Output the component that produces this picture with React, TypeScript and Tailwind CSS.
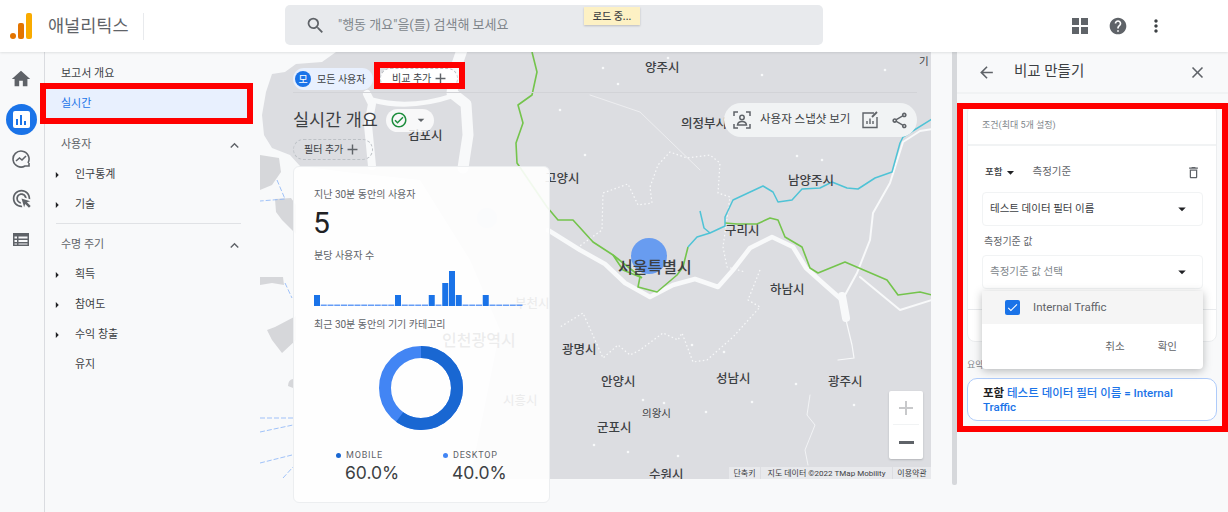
import React from 'react';
import {
  MdAdd,
  MdAdsClick,
  MdArrowBack,
  MdArrowDropDown,
  MdArrowRight,
  MdCheck,
  MdClose,
  MdExpandLess,
  MdHelp,
  MdHome,
  MdMoreVert,
  MdOutlineCheckCircle,
  MdOutlineDelete,
  MdOutlineShare,
  MdSearch,
} from 'react-icons/md';

const mapLabels = [
  { text: '양주시', cls: 'left-[385px] top-[7px] text-[12.5px]' },
  { text: '의정부시', cls: 'left-[421px] top-[63px] text-[12.5px]' },
  { text: '김포시', cls: 'left-[148px] top-[75px] text-[12.5px]' },
  { text: '고양시', cls: 'left-[285px] top-[118px] text-[12.5px]' },
  { text: '남양주시', cls: 'left-[528px] top-[120px] text-[12.5px]' },
  { text: '구리시', cls: 'left-[465px] top-[170px] text-[12.5px]' },
  { text: '서울특별시', cls: 'left-[358px] top-[204px] text-[16px]' },
  { text: '하남시', cls: 'left-[510px] top-[229px] text-[12.5px]' },
  { text: '부천시', cls: 'left-[255px] top-[243px] text-[12.5px]' },
  { text: '인천광역시', cls: 'left-[182px] top-[277px] text-[16px]' },
  { text: '광명시', cls: 'left-[302px] top-[289px] text-[12.5px]' },
  { text: '안양시', cls: 'left-[341px] top-[321px] text-[12.5px]' },
  { text: '성남시', cls: 'left-[456px] top-[318px] text-[12.5px]' },
  { text: '광주시', cls: 'left-[568px] top-[321px] text-[12.5px]' },
  { text: '시흥시', cls: 'left-[243px] top-[340px] text-[12.5px]' },
  { text: '의왕시', cls: 'left-[382px] top-[354px] text-[10.5px] font-normal' },
  { text: '군포시', cls: 'left-[337px] top-[367px] text-[12.5px]' },
  { text: '수원시', cls: 'left-[389px] top-[414px] text-[12.5px]' },
  { text: '기', cls: 'left-[659px] top-[2px] text-[10.5px] font-normal' },
];

const tallBars: Record<number, number> = { 0: 11, 12: 11, 17: 11, 19: 23, 20: 35, 21: 11, 25: 11 };

const specks = [
  [603, 68], [618, 84], [762, 75], [885, 70], [797, 116], [668, 58], [560, 110], [585, 155],
  [797, 156], [822, 160], [724, 352], [692, 345], [643, 400], [664, 403], [796, 384], [752, 402],
  [706, 412], [594, 445], [628, 452], [678, 456], [854, 405],
];

function SeoulMap() {
  const dash = '1.5 2.5';
  return (
    <svg viewBox="260 52 671 427" className="absolute left-0 top-0 h-[427px] w-[671px]">
      <rect x="260" y="52" width="671" height="427" fill="#dcdde1" />
      {/* sea */}
      <path
        d="M260 52H336L322 62 296 64 285 72 272 74 266 92 262 115 264 135 272 148 290 155 300 166 345 172 350 300 330 479H260Z"
        fill="#f8f9fa"
      />
      <path d="M345 172L420 180 470 260 500 330 470 479H330Z" fill="#f8f9fa" />
      {/* islands */}
      <g fill="#d6d7da">
        <path d="M260 155L279 158 281 172 272 185 260 190Z" />
        <path d="M275 199L291 198 296 205 296 234 282 220 276 212Z" />
        <path d="M260 277L283 277 284 285 272 283 260 285Z" />
        <path d="M267 330L275 327 296 316 296 340 282 353 272 340Z" />
        <path d="M288 386Q288 380 293 379V388Z" />
      </g>
      {/* rivers */}
      <g fill="none" stroke="#f8f9fa" strokeLinecap="round" strokeLinejoin="round">
        <path d="M462 50L455 70 452 93 466 104 468 135 463 168" strokeWidth="11" />
        <path d="M367 94L372 104 368 125 372 166" strokeWidth="8" />
        <path d="M372 100Q410 110 452 96" strokeWidth="5" />
        <path d="M548 230L580 250 605 264 625 283 650 297 673 285 695 279 718 287 733 270 750 248 772 237 793 247 806 268 825 285 842 300" strokeWidth="4.5" />
        <path d="M842 296L846 318" strokeWidth="8" />
        <path d="M932 129L920 131 903 142 890 183 873 213 870 240 857 273 845 295" strokeWidth="2" />
        <path d="M860 277L900 310 932 300" strokeWidth="2" />
        <path d="M846 320L852 345 854 358 838 360" strokeWidth="1.2" />
        <path d="M810 395L807 415 815 425 805 450 808 465" strokeWidth="0.8" />
        <path d="M590 95L640 112 700 170" strokeWidth="0.6" />
      </g>
      <g fill="#f8f9fa">
        {specks.map(([x, y]) => (
          <circle key={`${x}-${y}`} cx={x} cy={y} r="1.3" />
        ))}
      </g>
      {/* district borders */}
      <g fill="none" stroke="#f8f9fa" strokeWidth="1.2" strokeDasharray={dash} strokeLinejoin="round">
        <path d="M577 248L602 230 603 193 628 184 638 205 652 203 650 187 658 165 670 152 687 158 710 155 720 163 718 193 730 197 723 247 727 267 745 272" />
        <path d="M760 270L748 300 760 307 733 337 707 360 693 362 682 333 678 340 663 333 640 350 630 355 618 345 603 358 583 313 560 327" />
      </g>
      {/* sea borders */}
      <g fill="none" stroke="#8ab4f8" strokeOpacity="0.8" strokeWidth="1" strokeDasharray="5 2">
        <path d="M277 180L285 199 260 201" />
        <path d="M285 283L292 298" />
        <path d="M260 418H293" />
        <path d="M260 432L293 425" />
        <path d="M260 463L292 455" />
        <path d="M283 478L293 467" />
      </g>
      {/* lines */}
      <g fill="none" stroke="#74c44c" strokeWidth="1.6" strokeLinejoin="round">
        <path d="M532 52L537 72 532 95 518 105 523 123 516 143 517 163 547 207 558 220 573 220 593 242 613 255 642 278" />
        <path d="M613 255L623 270 640 277 638 287 657 292 677 275 683 267 688 247" />
        <path d="M725 223L737 224 757 224 770 218 778 220 785 237 802 247 810 268 818 273 845 262 887 280 898 295 920 292 932 295" />
      </g>
      <path
        d="M700 211L704 228 710 233 725 226 725 217 733 200 763 186 773 192 778 202 792 200 802 189 820 188 832 182 847 188 858 189 875 178 892 172 900 143 903 137 932 119M688 247L697 237 710 233"
        fill="none"
        stroke="#4fc3d6"
        strokeWidth="1.5"
        strokeLinejoin="round"
      />
      <circle cx="649" cy="256" r="18" fill="#4285f4" fillOpacity="0.75" />
      <circle cx="487" cy="218" r="10" fill="#4285f4" fillOpacity="0.12" />
    </svg>
  );
}

function SnapshotIcon() {
  return (
    <svg viewBox="0 0 18 18" className="h-[18px] w-[18px]" fill="none" stroke="#5f6368" strokeWidth="1.5">
      <path d="M1 5V1H5M13 1H17V5M17 13V17H13M5 17H1V13" />
      <circle cx="9" cy="6.5" r="2.2" />
      <path d="M4.5 14Q5 10.5 9 10.5T13.5 14Z" />
    </svg>
  );
}

function ChartEditIcon() {
  return (
    <svg viewBox="0 0 18 18" className="h-[18px] w-[18px]" fill="none" stroke="#5f6368" strokeWidth="1.4">
      <path d="M13 2H2V16.500H16V6" />
      <path d="M6 13V10M9 13V7.500M12 13V10" />
      <path d="M11 6L16 1" strokeWidth="1.800" />
    </svg>
  );
}

function RailTrendIcon() {
  return (
    <svg viewBox="0 0 18 18" className="h-[18px] w-[18px]" fill="none" stroke="#5f6368" strokeWidth="1.6">
      <path d="M16 13A8 8 0 1 0 13 16H17V13" />
      <path d="M4 11L7.500 8 10 10 14 6" />
    </svg>
  );
}

function TableIcon() {
  return (
    <svg viewBox="0 0 16 13" className="h-[13px] w-[16px]" fill="#5f6368">
      <path d="M0 0H16V13H0ZM1.500 3.500V5.500H4V3.500ZM5.500 3.500V5.500H14.500V3.500ZM1.500 7V9H4V7ZM5.500 7V9H14.500V7ZM5.500 10.500V11.500H14.500V10.500ZM1.500 10.500V11.500H4V10.500Z" fillRule="evenodd" />
    </svg>
  );
}

function AddChip({ label, className }: { label: string; className: string }) {
  return (
    <div className={`flex h-[21px] items-center gap-[1px] rounded-full border border-dashed border-[#bdc1c6] text-[10px] text-[#3c4043] ${className}`}>
      <span>{label}</span>
      <MdAdd size={17} className="text-[#5f6368]" />
    </div>
  );
}

function DeviceStat({ label, value, dot }: { label: string; value: string; dot: string }) {
  return (
    <div className="w-[107px] shrink-0">
      <div className="flex items-center gap-[5px] text-[9px] tracking-[0.8px] text-[#5f6368]">
        <span className={`h-[5px] w-[5px] rounded-full ${dot}`} />
        {label}
      </div>
      <div className="-mt-[2px] ml-[9px] font-['Inter',sans-serif] text-[17.5px] leading-[23px] text-[#3c4043]">{value}</div>
    </div>
  );
}

function SelectBox({ label, muted }: { label: string; muted?: boolean }) {
  return (
    <div className={`flex h-[34px] items-center justify-between rounded-[4px] border border-[#f1f3f4] pl-[7px] pr-[11px] text-[10.500px] ${muted ? 'text-[#80868b]' : 'text-[#3c4043]'}`}>
      <span>{label}</span>
      <MdArrowDropDown size={18} className="text-[#202124]" />
    </div>
  );
}

function NavChild({ label, arrow = true }: { label: string; arrow?: boolean }) {
  return (
    <div className="flex h-[30px] items-center pl-[1px]">
      <span className="flex w-[18px] justify-start">
        {arrow && <MdArrowRight size={14} className="-ml-[7px] text-[#202124]" />}
      </span>
      {label}
    </div>
  );
}

function NavTitle({ label }: { label: string }) {
  return (
    <div className="flex h-[30px] items-center justify-between text-[#5f6368]">
      <span className="pl-[5px]">{label}</span>
      <MdExpandLess size={17} className="-mr-[2px]" />
    </div>
  );
}

export default function App() {
  return (
    <div className="relative flex h-[512px] w-[1228px] flex-col overflow-hidden bg-[#f8f9fa] font-['Roboto','Noto_Sans_CJK_KR',sans-serif]">
      {/* Top bar */}
      <header className="relative z-10 flex h-[52px] shrink-0 items-center bg-white shadow-[0_1px_2px_rgba(60,64,67,0.12)]">
        <div className="flex w-[285px] shrink-0 items-center">
          <svg viewBox="0 0 22 26" className="ml-[10px] h-[26px] w-[22px]">
            <circle cx="3" cy="23" r="3" fill="#e37400" />
            <rect x="8" y="10" width="6" height="16" rx="2" fill="#e37400" />
            <rect x="16" y="0" width="6" height="26" rx="2" fill="#f9ab00" />
          </svg>
          <span className="ml-[16px] text-[17.5px] text-[#5f6368]">애널리틱스</span>
          <div className="ml-[14px] h-[27px] w-px bg-[#e8eaed]" />
        </div>
        <div className="-mt-[2px] flex h-[40px] w-[538px] items-center rounded-[5px] bg-[#e8eaed] pl-[20px]">
          <MdSearch size={21} className="text-[#5f6368]" />
          <span className="ml-[12px] text-[13px] text-[#80868b]">"행동 개요"을(를) 검색해 보세요</span>
        </div>
        <div className="ml-auto mr-[62px] flex items-center gap-[20px]">
          <svg viewBox="0 0 16 16" className="h-[16px] w-[16px]" fill="#5f6368">
            <rect width="7" height="7" />
            <rect x="9" width="7" height="7" />
            <rect y="9" width="7" height="7" />
            <rect x="9" y="9" width="7" height="7" />
          </svg>
          <MdHelp size={20} className="text-[#5f6368]" />
          <MdMoreVert size={20} className="-ml-[2px] text-[#3c4043]" />
        </div>
        <div className="absolute left-[584px] top-[7px] flex h-[18px] w-[56px] items-center justify-center bg-[#fdf1c4] text-[10px] font-medium text-[#3c4043] shadow-[0_1px_2px_rgba(0,0,0,0.2)]">
          로드 중...
        </div>
      </header>

      <div className="flex min-h-0 flex-1">
        {/* Icon rail */}
        <aside className="flex w-[45px] shrink-0 flex-col items-center border-r border-[#dadce0] pr-[2px] pt-[17px] text-[#5f6368]">
          <div className="flex h-[20px] items-center justify-center">
            <MdHome size={22} />
          </div>
          <div className="mt-[15px] flex h-[31px] w-[31px] items-center justify-center rounded-full bg-[#1a73e8]">
            <div className="flex h-[17px] w-[17px] items-end justify-center gap-[2px] rounded-[2px] bg-white pb-[3px]">
              <span className="h-[6px] w-[2px] bg-[#1a73e8]" />
              <span className="h-[10px] w-[2px] bg-[#1a73e8]" />
              <span className="h-[4px] w-[2px] bg-[#1a73e8]" />
            </div>
          </div>
          <div className="mt-[15px]">
            <RailTrendIcon />
          </div>
          <div className="mt-[20px]">
            <MdAdsClick size={21} />
          </div>
          <div className="mt-[24px]">
            <TableIcon />
          </div>
        </aside>

        {/* Report nav */}
        <nav className="w-[215px] shrink-0 pt-[8px] text-[11px] text-[#3c4043]">
          <div className="flex h-[29px] items-center pl-[16px]">보고서 개요</div>
          <div className="flex h-[31px] w-[202px] items-center bg-[#e8f0fe] pl-[16px] text-[#1a73e8]">실시간</div>
          <div className="ml-[11px] mt-[10px] w-[185px]">
            <NavTitle label="사용자" />
            <NavChild label="인구통계" />
            <NavChild label="기술" />
            <div className="mt-[3px] h-px bg-[#e0e2e5]" />
            <div className="mt-[6px]">
              <NavTitle label="수명 주기" />
            </div>
            <NavChild label="획득" />
            <NavChild label="참여도" />
            <NavChild label="수익 창출" />
            <NavChild label="유지" arrow={false} />
          </div>
        </nav>

        {/* Realtime map page */}
        <main className="relative w-[692px] shrink-0">
          <SeoulMap />
          <div className="absolute left-0 top-0 h-[427px] w-[671px] overflow-hidden">
            {mapLabels.map((l) => (
              <span key={l.text} className={`absolute whitespace-nowrap font-medium text-[#3c4043] ${l.cls}`}>
                {l.text}
              </span>
            ))}
          </div>

          <div className="absolute left-[469px] top-[415px] flex h-[12px] gap-px overflow-hidden text-[8px] leading-[14px] text-[#3c4043]">
            <span className="w-[31px] bg-[#e8e9ec] text-center">단축키</span>
            <span className="w-[131px] bg-[#e8e9ec] text-center">지도 데이터 ©2022 TMap Mobility</span>
            <span className="w-[38px] bg-[#e8e9ec] text-center">이용약관</span>
          </div>
          <div className="absolute left-[629px] top-[339px] flex h-[68px] w-[34px] flex-col items-center rounded-[2px] bg-white shadow-[0_1px_2px_rgba(60,64,67,0.25)]">
            <div className="flex h-[34px] w-[26px] items-center justify-center border-b border-[#f1f3f4]">
              <MdAdd size={24} className="text-[#c8c9cb]" />
            </div>
            <div className="flex h-[34px] items-center justify-center">
              <span className="h-[3px] w-[15px] bg-[#5f6368]" />
            </div>
          </div>

          <div className="relative pl-[33px]">
            <div className="flex h-[41px] w-[624px] items-start gap-[7px] border-b border-[#d2d3d7] pt-[16px]">
              <div className="flex h-[22px] w-[80px] items-center gap-[6px] rounded-full bg-[#e8f0fe] pl-[2px] text-[10px] text-[#3c4043]">
                <span className="flex h-[16px] w-[16px] items-center justify-center rounded-full bg-[#1a73e8] text-[10px] text-white">모</span>
                모든 사용자
              </div>
              <AddChip label="비교 추가" className="w-[78px] bg-white pl-[11px]" />
            </div>

            <div className="flex w-[624px] justify-between">
              <div>
                <div className="mt-[16px] flex h-[22px] items-center">
                  <h1 className="text-[17.5px] font-normal text-[#3c4043]">실시간 개요</h1>
                  <div className="ml-[8px] flex h-[23px] w-[48px] items-center rounded-full bg-white/80 pl-[4px] text-[#1e8e3e]">
                    <MdOutlineCheckCircle size={18} />
                    <MdArrowDropDown size={16} className="ml-[5px] text-[#5f6368]" />
                  </div>
                </div>
                <AddChip label="필터 추가" className="mt-[8px] w-[80px] pl-[10px]" />
              </div>
              <div className="mt-[10px] flex h-[34px] w-[193px] items-center rounded-full bg-[#f1f3f4] pl-[9px] text-[#5f6368]">
                <SnapshotIcon />
                <span className="ml-[9px] w-[88px] whitespace-nowrap text-[11.5px] text-[#3c4043]">사용자 스냅샷 보기</span>
                <span className="ml-[13px]">
                  <ChartEditIcon />
                </span>
                <MdOutlineShare size={19} className="ml-[11px]" />
              </div>
            </div>

            <section className="mt-[6px] h-[337px] w-[257px] rounded-[6px] border border-[#eceef0] bg-white/90 px-[20px] pt-[21px]">
              <p className="text-[10px] leading-[14px] text-[#5f6368]">지난 30분 동안의 사용자</p>
              <p className="-ml-[1px] mt-[4px] text-[30px] leading-[34px] text-[#202124]">5</p>
              <p className="mt-[9px] text-[10px] leading-[14px] text-[#5f6368]">분당 사용자 수</p>
              <svg viewBox="0 0 209 36" className="mt-[8px] block h-[36px] w-[209px]">
                {Array.from({ length: 31 }, (_, i) =>
                  tallBars[i] ? (
                    <rect key={i} x={i * 6.75} y={35 - tallBars[i]} width="6" height={tallBars[i]} fill="#1a73e8" />
                  ) : (
                    <rect key={i} x={i * 6.75} y="33.500" width="6" height="1.500" fill="#669df6" />
                  ),
                )}
              </svg>
              <p className="mt-[11px] text-[10px] leading-[14px] text-[#5f6368]">최근 30분 동안의 기기 카테고리</p>
              <div className="mt-[14px] flex justify-center">
                <svg viewBox="0 0 84 84" className="mr-[1px] h-[84px] w-[84px] -rotate-90">
                  <circle cx="42" cy="42" r="36" fill="none" stroke="#4285f4" strokeWidth="12" />
                  <circle cx="42" cy="42" r="36" fill="none" stroke="#1967d2" strokeWidth="12" strokeDasharray="135.700 226.200" />
                </svg>
              </div>
              <div className="mt-[19px] flex pl-[22px]">
                <DeviceStat label="MOBILE" value="60.0%" dot="bg-[#1967d2]" />
                <DeviceStat label="DESKTOP" value="40.0%" dot="bg-[#4285f4]" />
              </div>
            </section>
          </div>
        </main>

        {/* Scrollbar */}
        <div className="w-[5px] shrink-0">
          <div className="h-[433px] w-[5px] rounded-b-[2px] bg-[#d6d8db]" />
        </div>

        {/* Compare panel */}
        <aside className="min-w-0 flex-1 bg-[#f8f9fa]">
          <div className="flex h-[42px] items-center justify-between border-b-2 border-[#f1f3f4] pl-[20px] pr-[21px] text-[#5f6368]">
            <div className="flex items-center">
              <MdArrowBack size={19} />
              <span className="ml-[18px] text-[14.5px] text-[#3c4043]">비교 만들기</span>
            </div>
            <MdClose size={19} />
          </div>

          <div className="relative px-[10px] pt-[10px]">
            <div className="h-[238px] w-[250px] rounded-[8px] border border-[#eceef0] bg-white">
              <div className="flex h-[41px] items-center border-b-2 border-[#f1f3f4] pl-[14px] pt-[3px] text-[9px] text-[#80868b]">조건(최대 5개 설정)</div>
              <div className="pl-[14px] pr-[13px]">
                <div className="flex h-[46px] items-center pl-[3px] pr-[2px] pt-[6px] text-[10.500px]">
                  <span className="text-[9.500px] font-medium text-[#3c4043]">포함</span>
                  <MdArrowDropDown size={17} className="text-[#202124]" />
                  <span className="ml-[13px] text-[#5f6368]">측정기준</span>
                  <MdOutlineDelete size={15} className="ml-auto text-[#5f6368]" />
                </div>
                <SelectBox label="테스트 데이터 필터 이름" />
                <p className="mb-[6px] mt-[9px] pl-[2px] text-[10px] leading-[14px] text-[#5f6368]">측정기준 값</p>
                <SelectBox label="측정기준 값 선택" muted />
              </div>
              <div className="mt-[20px] border-t border-[#e8eaed]" />
            </div>

            <p className="mt-[17px] text-[9px] leading-[12px] text-[#80868b]">요약</p>
            <div className="mt-[7px] h-[43px] w-[250px] rounded-[10px] border border-[#aecbfa] bg-white px-[15px] py-[7px] text-[11.500px] font-medium leading-[14px] text-[#1a73e8]">
              <b className="font-bold text-[#202124]">포함</b> 테스트 데이터 필터 이름 = Internal Traffic
            </div>

            {/* Value dropdown */}
            <div className="absolute left-[25px] top-[197px] w-[221px] rounded-b-[4px] bg-white shadow-[0_2px_8px_rgba(60,64,67,0.35)]">
              <div className="flex h-[33px] items-center bg-[#f5f5f5] pl-[23px] text-[11.500px] text-[#5f6368]">
                <span className="flex h-[15px] w-[15px] items-center justify-center rounded-[2px] bg-[#1a73e8]">
                  <MdCheck size={13} className="text-white" />
                </span>
                <span className="ml-[13px]">Internal Traffic</span>
              </div>
              <div className="flex h-[45px] items-center justify-end gap-[33px] pr-[26px] text-[10.500px] text-[#5f6368]">
                <span>취소</span>
                <span>확인</span>
              </div>
            </div>
          </div>
        </aside>
      </div>

      {/* Red annotation boxes */}
      <div className="pointer-events-none absolute left-[40px] top-[83px] h-[41px] w-[213px] border-[6px] border-[#ff0000]" />
      <div className="pointer-events-none absolute left-[374px] top-[62px] h-[27px] w-[91px] border-[6px] border-[#ff0000]" />
      <div className="pointer-events-none absolute left-[957px] top-[103px] h-[329px] w-[271px] border-[6px] border-[#ff0000]" />
    </div>
  );
}
